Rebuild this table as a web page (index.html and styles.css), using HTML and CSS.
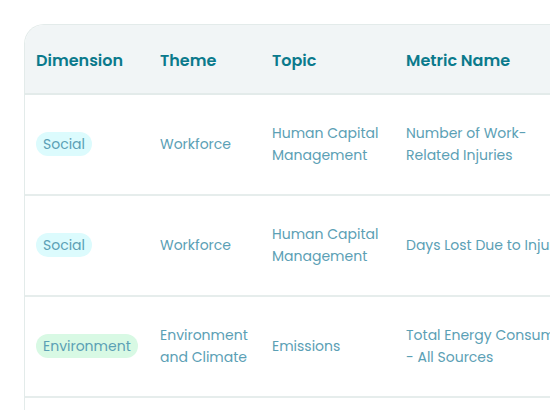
FILE: index.html
```html
<!DOCTYPE html>
<html lang="en">
    <head>
        <meta charset="UTF-8">
        <title>Metrics</title>
        <link rel="stylesheet" href="styles.css">
    </head>
    <body>
        <div class="card">
            <table class="metrics">
                <thead>
                    <tr>
                        <th class="col-dim">Dimension</th>
                        <th class="col-theme">Theme</th>
                        <th class="col-topic">Topic</th>
                        <th class="col-metric">Metric Name</th>
                    </tr>
                </thead>
                <tbody>
                    <tr>
                        <td><span class="pill social">Social</span></td>
                        <td>Workforce</td>
                        <td>Human Capital<br>Management</td>
                        <td>Number of Work-<br>Related Injuries</td>
                    </tr>
                    <tr>
                        <td><span class="pill social">Social</span></td>
                        <td>Workforce</td>
                        <td>Human Capital<br>Management</td>
                        <td class="nowrap">Days Lost Due to Injuries</td>
                    </tr>
                    <tr>
                        <td><span class="pill environment">Environment</span></td>
                        <td>Environment<br>and Climate</td>
                        <td>Emissions</td>
                        <td class="nowrap">Total Energy Consumption<br>- All Sources</td>
                    </tr>
                </tbody>
            </table>
        </div>
    </body>
</html>
```

FILE: styles.css
```css
body {
    margin: 0;
    background-color: #fff;
    font-family: "Poppins", "Open Sans", sans-serif;
    overflow: hidden;
    height: 410px;
}
.card {
    margin: 24px 0 0 24px;
    width: 700px;
    height: 420px;
    border: 1px solid #e3ebea;
    border-right: none;
    border-radius: 20px 0 0 0;
    overflow: hidden;
}
.metrics {
    border-collapse: collapse;
    width: 100%;
    table-layout: fixed;
}
.metrics th {
    background-color: #f1f5f6;
    color: #0b7a8c;
    font-size: 16px;
    font-weight: 600;
    text-align: left;
    line-height: 24px;
    padding: 24px 0 20px 11px;
    border-bottom: 2px solid #e3ebea;
}
.col-dim { width: 113px; }
.col-theme { width: 101px; }
.col-topic { width: 123px; }
.metrics td {
    color: #5ba0b5;
    font-size: 14px;
    line-height: 22px;
    padding: 27px 0 28px 11px;
    border-bottom: 2px solid #e6edec;
    vertical-align: middle;
}
.nowrap {
    white-space: nowrap;
}
.pill {
    display: inline-block;
    padding: 1px 7px;
    border-radius: 12px;
    line-height: 22px;
}
.social {
    background-color: #dcfbfd;
}
.environment {
    background-color: #d8f9e4;
}
```
